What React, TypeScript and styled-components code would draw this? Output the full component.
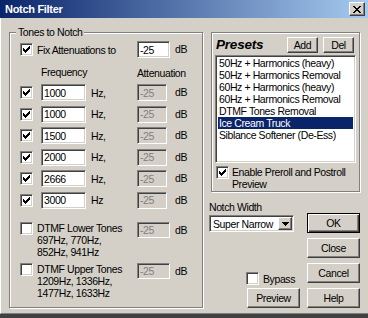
import React from "react";
import styled, { createGlobalStyle, css } from "styled-components";

const FONT = `"Liberation Sans", Arial, sans-serif`;

const Global = createGlobalStyle`
  html, body { margin: 0; padding: 0; background: #d4d0c8; }
  body { font-family: ${FONT}; font-size: 10.5px; letter-spacing: -0.4px; color: #000; }
  * { box-sizing: border-box; }
`;

const sunken = css`
  border: 1px solid;
  border-color: #808080 #ffffff #ffffff #808080;
  box-shadow: inset 1px 1px 0 #404040, inset -1px -1px 0 #d4d0c8;
`;

const raised = css`
  border: 1px solid;
  border-color: #ffffff #404040 #404040 #ffffff;
  box-shadow: inset -1px -1px 0 #808080;
`;

const etched = css`
  border: 1px solid #808080;
  box-shadow: inset 1px 1px 0 #ffffff, 1px 1px 0 #ffffff;
`;

const Window = styled.div`
  width: 368px;
  height: 318px;
  background: #d4d0c8;
  display: flex;
  flex-direction: column;
  overflow: hidden;
  border-bottom: 4px solid #404040;
`;

const TitleBar = styled.div`
  height: 18px;
  flex: none;
  display: flex;
  align-items: center;
  justify-content: space-between;
  padding: 0 3px 0 5px;
  background: linear-gradient(90deg, #0a246a 0%, #a6caf0 100%);
`;

const Title = styled.span`
  color: #fff;
  font-weight: bold;
  font-size: 11px;
  letter-spacing: -0.3px;
  line-height: 14px;
`;

const CloseBtn = styled.div`
  ${raised};
  width: 16px;
  height: 14px;
  background: #d4d0c8;
  display: flex;
  align-items: center;
  justify-content: center;
`;

const Body = styled.div`
  flex: 1;
  display: flex;
  align-items: flex-start;
  gap: 6px;
  padding: 14px 0 0 8px;
  border-left: 1px solid #ffffff;
  border-bottom: 1px solid #808080;
`;

const GroupBox = styled.div`
  ${etched};
  width: 194px;
  height: 276px;
  display: flex;
  flex-direction: column;
  padding-left: 10px;
`;

const Legend = styled.span`
  align-self: flex-start;
  margin: -7px 0 0 -4px;
  padding: 0 2px;
  background: #d4d0c8;
  line-height: 12px;
  height: 12px;
`;

const Label = styled.span`
  line-height: 12px;
  white-space: nowrap;
`;

const Field = styled.div<{ $w: number; $disabled?: boolean; $h?: number }>`
  ${sunken};
  width: ${(p) => p.$w}px;
  height: ${(p) => p.$h ?? 17}px;
  padding: 0 2px;
  display: flex;
  align-items: center;
  background: ${(p) => (p.$disabled ? "#d4d0c8" : "#ffffff")};
  color: ${(p) => (p.$disabled ? "#808080" : "#000000")};
  line-height: 12px;
`;

const FixRow = styled.div`
  margin-top: 3px;
  height: 17px;
  display: grid;
  grid-template-columns: 117px 38px auto;
  align-items: center;
`;

const CheckLabel = styled.div`
  display: flex;
  align-items: center;
  gap: 4px;
`;

const HeaderRow = styled.div`
  margin-top: 8px;
  height: 12px;
  display: grid;
  grid-template-columns: 21px 96px auto;
`;

const HeaderCell = styled.span<{ $col: number; $dy?: number }>`
  grid-column: ${(p) => p.$col};
  line-height: 12px;
  position: relative;
  top: ${(p) => p.$dy ?? 0}px;
`;

const FreqList = styled.div`
  margin-top: 6px;
  display: flex;
  flex-direction: column;
  gap: 4.5px;
`;

const FreqRow = styled.div`
  height: 17px;
  display: grid;
  grid-template-columns: 21px 96px 38px auto;
  align-items: center;
`;

const FreqCell = styled.div`
  display: flex;
  align-items: center;
  gap: 5px;
`;

const DtmfRow = styled.div<{ $mt: number }>`
  margin-top: ${(p) => p.$mt}px;
  display: grid;
  grid-template-columns: 17px 100px 38px auto;
  align-items: start;
`;

const DtmfText = styled.div`
  line-height: 12px;
  white-space: nowrap;
`;

const UnitLabel = styled.span`
  line-height: 17px;
`;

const BoxOuter = styled.div`
  ${sunken};
  width: 13px;
  height: 13px;
  flex: none;
  background: #fff;
  display: flex;
  align-items: center;
  justify-content: center;
`;

const RightCol = styled.div`
  width: 151px;
  display: flex;
  flex-direction: column;
`;

const PresetsBox = styled.div`
  ${etched};
  margin-left: 2px;
  width: 149px;
  height: 160px;
  padding: 4px 3px 0 3px;
  display: flex;
  flex-direction: column;
`;

const PresetsHeader = styled.div`
  height: 16px;
  display: flex;
  align-items: center;
  justify-content: space-between;
`;

const PresetsTitle = styled.span`
  font-weight: bold;
  font-style: italic;
  font-size: 13.5px;
  letter-spacing: -0.2px;
  line-height: 16px;
  margin-left: 1px;
`;

const SmallBtns = styled.div`
  display: flex;
  gap: 5px;
  margin-right: 2px;
`;

const Button = styled.div<{ $w?: number; $h?: number; $default?: boolean }>`
  width: ${(p) => p.$w ?? 53}px;
  height: ${(p) => p.$h ?? 20}px;
  background: #d4d0c8;
  display: flex;
  align-items: center;
  justify-content: center;
  line-height: 12px;
  ${(p) =>
    p.$default
      ? css`
          border: 1px solid #000;
          box-shadow: inset 1px 1px 0 #fff, inset -1px -1px 0 #404040, inset -2px -2px 0 #808080;
        `
      : raised};
`;

const ListBox = styled.div`
  ${sunken};
  margin-top: 2px;
  width: 141px;
  height: 108px;
  background: #fff;
  padding: 1px 2px;
  display: flex;
  flex-direction: column;
`;

const ListItem = styled.div<{ $selected?: boolean }>`
  height: 12px;
  line-height: 12px;
  padding-left: 1px;
  white-space: nowrap;
  overflow: hidden;
  background: ${(p) => (p.$selected ? "#0a246a" : "transparent")};
  color: ${(p) => (p.$selected ? "#fff" : "#000")};
`;

const EnableRow = styled.div`
  margin: 3px 0 0 1px;
  display: flex;
  gap: 3px;
  align-items: flex-start;
`;

const BottomArea = styled.div`
  display: flex;
  gap: 6px;
`;

const LeftSub = styled.div`
  flex: 1;
  display: flex;
  flex-direction: column;
`;

const NotchLabel = styled.span`
  margin-top: 9px;
  line-height: 12px;
`;

const Combo = styled.div`
  ${sunken};
  margin-top: 2px;
  width: 85px;
  height: 17px;
  background: #fff;
  display: flex;
  align-items: center;
  justify-content: space-between;
  padding: 1px 1px 1px 3px;
`;

const ComboBtn = styled.div`
  ${raised};
  width: 14px;
  height: 13px;
  background: #d4d0c8;
  display: flex;
  align-items: center;
  justify-content: center;
`;

const BypassRow = styled.div`
  margin-top: auto;
  padding-left: 37px;
  height: 13px;
  display: flex;
  align-items: center;
  gap: 4px;
`;

const PreviewWrap = styled.div`
  margin: 3px 0 0 38px;
`;

const ButtonCol = styled.div`
  width: 53px;
  margin-top: 21px;
  display: flex;
  flex-direction: column;
  gap: 5px;
`;

const CheckMark = () => (
  <svg width="7" height="7" viewBox="0 0 7 7" shapeRendering="crispEdges">
    <path
      fill="#000"
      d="M0 2h1v3H0z M1 3h1v3H1z M2 4h1v3H2z M3 3h1v3H3z M4 2h1v3H4z M5 1h1v3H5z M6 0h1v3H6z"
    />
  </svg>
);

const CheckBox = ({ checked }: { checked?: boolean }) => (
  <BoxOuter>{checked ? <CheckMark /> : null}</BoxOuter>
);

const freqs = [
  { f: "1000", u: "Hz," },
  { f: "1000", u: "Hz," },
  { f: "1500", u: "Hz," },
  { f: "2000", u: "Hz," },
  { f: "2666", u: "Hz," },
  { f: "3000", u: "Hz" },
];

const presets = [
  "50Hz + Harmonics (heavy)",
  "50Hz + Harmonics Removal",
  "60Hz + Harmonics (heavy)",
  "60Hz + Harmonics Removal",
  "DTMF Tones Removal",
  "Ice Cream Truck",
  "Siblance Softener (De-Ess)",
];

export default function App() {
  return (
    <>
      <Global />
      <Window>
        <TitleBar>
          <Title>Notch Filter</Title>
          <CloseBtn>
            <svg width="8" height="7" viewBox="0 0 8 7" shapeRendering="crispEdges">
              <path
                fill="#000"
                d="M0 0h2v1H0z M6 0h2v1H6z M1 1h2v1H1z M5 1h2v1H5z M2 2h4v1H2z M3 3h2v1H3z M2 4h4v1H2z M1 5h2v1H1z M5 5h2v1H5z M0 6h2v1H0z M6 6h2v1H6z"
              />
            </svg>
          </CloseBtn>
        </TitleBar>
        <Body>
          <GroupBox>
            <Legend>Tones to Notch</Legend>
            <FixRow>
              <CheckLabel>
                <CheckBox checked />
                <Label>Fix Attenuations to</Label>
              </CheckLabel>
              <Field $w={33}>-25</Field>
              <UnitLabel>dB</UnitLabel>
            </FixRow>
            <HeaderRow>
              <HeaderCell $col={2}>Frequency</HeaderCell>
              <HeaderCell $col={3} $dy={1}>Attenuation</HeaderCell>
            </HeaderRow>
            <FreqList>
              {freqs.map((r, i) => (
                <FreqRow key={i}>
                  <CheckBox checked />
                  <FreqCell>
                    <Field $w={45}>{r.f}</Field>
                    <Label>{r.u}</Label>
                  </FreqCell>
                  <Field $w={30} $disabled>
                    -25
                  </Field>
                  <UnitLabel>dB</UnitLabel>
                </FreqRow>
              ))}
            </FreqList>
            <DtmfRow $mt={13.5}>
              <CheckBox />
              <DtmfText>
                DTMF Lower Tones
                <br />
                697Hz, 770Hz,
                <br />
                852Hz, 941Hz
              </DtmfText>
              <Field $w={33} $h={16} $disabled>
                -25
              </Field>
              <UnitLabel>dB</UnitLabel>
            </DtmfRow>
            <DtmfRow $mt={5}>
              <CheckBox />
              <DtmfText>
                DTMF Upper Tones
                <br />
                1209Hz, 1336Hz,
                <br />
                1477Hz, 1633Hz
              </DtmfText>
              <Field $w={33} $h={16} $disabled>
                -25
              </Field>
              <UnitLabel>dB</UnitLabel>
            </DtmfRow>
          </GroupBox>
          <RightCol>
            <PresetsBox>
              <PresetsHeader>
                <PresetsTitle>Presets</PresetsTitle>
                <SmallBtns>
                  <Button $w={31} $h={16}>Add</Button>
                  <Button $w={31} $h={16}>Del</Button>
                </SmallBtns>
              </PresetsHeader>
              <ListBox>
                {presets.map((p) => (
                  <ListItem key={p} $selected={p === "Ice Cream Truck"}>
                    {p}
                  </ListItem>
                ))}
              </ListBox>
              <EnableRow>
                <CheckBox checked />
                <Label>
                  Enable Preroll and Postroll
                  <br />
                  Preview
                </Label>
              </EnableRow>
            </PresetsBox>
            <BottomArea>
              <LeftSub>
                <NotchLabel>Notch Width</NotchLabel>
                <Combo>
                  <Label>Super Narrow</Label>
                  <ComboBtn>
                    <svg width="7" height="4" viewBox="0 0 7 4" shapeRendering="crispEdges">
                      <path fill="#000" d="M0 0h7v1H0z M1 1h5v1H1z M2 2h3v1H2z M3 3h1v1H3z" />
                    </svg>
                  </ComboBtn>
                </Combo>
                <BypassRow>
                  <CheckBox />
                  <Label>Bypass</Label>
                </BypassRow>
                <PreviewWrap>
                  <Button>Preview</Button>
                </PreviewWrap>
              </LeftSub>
              <ButtonCol>
                <Button $default>OK</Button>
                <Button>Close</Button>
                <Button>Cancel</Button>
                <Button>Help</Button>
              </ButtonCol>
            </BottomArea>
          </RightCol>
        </Body>
      </Window>
    </>
  );
}
